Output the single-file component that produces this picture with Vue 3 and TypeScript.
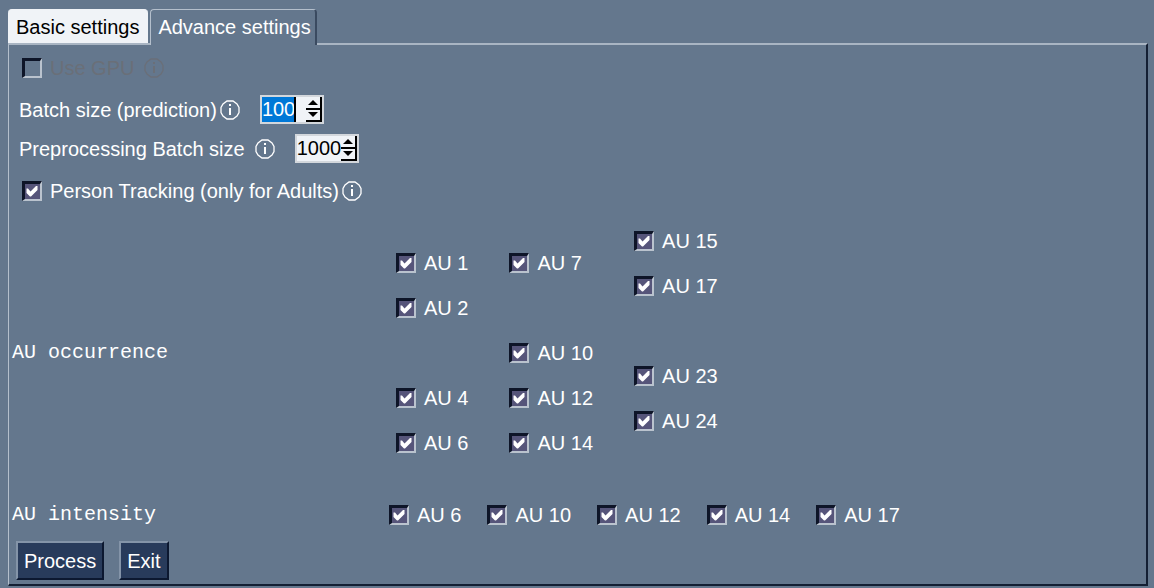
<script setup lang="ts">
import { defineComponent, h, onMounted, reactive, ref } from 'vue'

interface Unit {
  id: string
  label: string
  checked: boolean
}

const InfoIcon = defineComponent({
  render() {
    return h('svg', { class: 'info', viewBox: '0 0 20 20', 'aria-hidden': 'true' }, [
      h('path', { d: 'M7 1H13L17 4L19 7.5V12.5L17 16L13 19H7L3 16L1 12.5V7.5L3 4z' }),
      h('path', { d: 'M9 8H11V15H9zM9 4H11V6H9z', class: 'dot' }),
    ])
  },
})

function unit(group: string, n: number): Unit {
  return { id: `${group}-${n}`, label: `AU ${n}`, checked: true }
}

const occurrence = reactive<(Unit | null)[][]>([
  [unit('occ', 1), unit('occ', 2), null, unit('occ', 4), unit('occ', 6)],
  [unit('occ', 7), null, unit('occ', 10), unit('occ', 12), unit('occ', 14)],
  [unit('occ', 15), unit('occ', 17), null, unit('occ', 23), unit('occ', 24), null],
])
const intensity = reactive<Unit[]>([6, 10, 12, 14, 17].map((n) => unit('int', n)))

const useGpu = ref(false)
const tracking = ref(true)
const batch = ref(100)
const preBatch = ref(1000)
const batchInput = ref<HTMLInputElement | null>(null)

onMounted(() => {
  batchInput.value?.focus()
  batchInput.value?.select()
})
</script>

<template>
  <main class="window">
    <div class="tabs" role="tablist">
      <button class="tab" role="tab" type="button" aria-selected="false">Basic settings</button>
      <button class="tab active" role="tab" type="button" aria-selected="true">Advance settings</button>
    </div>
    <section class="panel" role="tabpanel">
      <div class="row gpu">
        <label class="check disabled wide">
          <input v-model="useGpu" type="checkbox" disabled /><span>Use GPU</span>
        </label>
        <InfoIcon class="dim" />
      </div>
      <div class="row batch">
        <label for="batch">Batch size (prediction)</label>
        <InfoIcon />
        <div class="spin">
          <input id="batch" ref="batchInput" v-model.number="batch" type="text" />
          <span class="caret"></span>
          <div class="arrows">
            <button type="button" aria-label="Increase" @click="batch++"><svg viewBox="0 0 8 4"><path d="M0 4L4 0L8 4z" /></svg></button>
            <button type="button" aria-label="Decrease" @click="batch--"><svg viewBox="0 0 8 4"><path d="M0 0L4 4L8 0z" /></svg></button>
          </div>
        </div>
      </div>
      <div class="row batch">
        <label for="prebatch" class="wide">Preprocessing Batch size</label>
        <InfoIcon />
        <div class="spin">
          <input id="prebatch" v-model.number="preBatch" type="text" />
          <div class="arrows">
            <button type="button" aria-label="Increase" @click="preBatch++"><svg viewBox="0 0 8 4"><path d="M0 4L4 0L8 4z" /></svg></button>
            <button type="button" aria-label="Decrease" @click="preBatch--"><svg viewBox="0 0 8 4"><path d="M0 0L4 4L8 0z" /></svg></button>
          </div>
        </div>
      </div>
      <div class="row tracking">
        <label class="check"><input v-model="tracking" type="checkbox" /><span>Person Tracking (only for Adults)</span></label>
        <InfoIcon />
      </div>

      <div class="group occurrence">
        <span class="title">AU occurrence</span>
        <div v-for="(column, c) in occurrence" :key="c" class="column">
          <div v-for="(item, i) in column" :key="i" class="slot">
            <label v-if="item" class="check"><input :id="item.id" v-model="item.checked" type="checkbox" /><span>{{ item.label }}</span></label>
          </div>
        </div>
      </div>

      <div class="group intensity">
        <span class="title">AU intensity</span>
        <label v-for="item in intensity" :key="item.id" class="check"><input :id="item.id" v-model="item.checked" type="checkbox" /><span>{{ item.label }}</span></label>
      </div>

      <div class="actions">
        <button type="button">Process</button>
        <button type="button">Exit</button>
      </div>
    </section>
  </main>
</template>

<style>
body {
  background: #64778d;
}
</style>

<style scoped>
.window {
  box-sizing: border-box;
  min-height: 100vh;
  padding: 9px 6px 1px 8px;
  background: #64778d;
  color: #fff;
  font: 20px/24px "Liberation Sans", Arial, sans-serif;
}
button,
input {
  margin: 0;
  padding: 0;
  border: 0;
  border-radius: 0;
  font: inherit;
  color: inherit;
}
.tabs {
  display: flex;
  gap: 2px;
}
.tab {
  height: 34px;
  padding: 0 9px 0 8px;
  border-top: 1px solid #f0f3f7;
  border-radius: 4px 4px 0 0;
  background: #f0f3f7;
  color: #000;
}
.tab.active {
  position: relative;
  height: 36px;
  margin-bottom: -2px;
  padding: 0 4px 2px 7px;
  border-top: 1px solid #b4bfcc;
  border-left: 1px solid #b4bfcc;
  border-right: 2px solid #3a4a60;
  background: #64778d;
  color: #fff;
}
.panel {
  border: solid;
  border-width: 2px 2px 2px 1px;
  border-color: #a9b5c3 #141f33 #141f33 #b4bfcc;
  padding-bottom: 4px;
}
.row {
  display: flex;
  align-items: center;
}
.gpu {
  min-height: 45px;
  padding-left: 13px;
}
.batch {
  min-height: 39px;
  padding-left: 10px;
}
.tracking {
  min-height: 45px;
  margin-bottom: 5px;
  padding-left: 13px;
}
.info {
  width: 20px;
  height: 20px;
  margin-left: 3px;
  flex: none;
  fill: none;
  stroke: #fff;
  stroke-width: 1.3;
}
.info :deep(.dot) {
  fill: #fff;
  stroke: none;
}
.wide + .info {
  margin-left: 10px;
}
.dim {
  stroke: #6a6f78;
}
.dim :deep(.dot) {
  fill: #6a6f78;
}
.check {
  display: flex;
  align-items: center;
  gap: 8px;
  white-space: nowrap;
}
.check input {
  appearance: none;
  box-sizing: border-box;
  width: 20px;
  height: 20px;
  flex: none;
  border: solid;
  border-width: 3px 2px 2px 3px;
  border-color: #0e1528 #bac3ce #bac3ce #0e1528;
  background: #64778d;
}
.check input:checked {
  background: #56557a url("data:image/svg+xml,%3Csvg xmlns='http://www.w3.org/2000/svg' viewBox='0 0 15 15'%3E%3Cpath d='M1.5 4.5H3L5.5 7.5L11 2H12.5V6L6 12.5H5L1.5 9z' fill='white'/%3E%3C/svg%3E") center / 15px 15px no-repeat;
}
.disabled {
  color: #6a6f78;
}
.spin {
  position: relative;
  display: flex;
  box-sizing: border-box;
  width: 64px;
  height: 29px;
  margin-left: 20px;
  border: 2px solid #d3d7dc;
  background: #f0f3f7;
  color: #000;
}
.spin input {
  width: 44px;
  min-width: 0;
  height: 25px;
  box-sizing: border-box;
  background: transparent;
  line-height: 25px;
  outline: 0;
}
.spin input::selection {
  background: #0078d7;
  color: #fff;
}
.caret {
  position: absolute;
  top: 0;
  left: 32px;
  width: 2px;
  height: 25px;
  background: #000;
}
.arrows {
  display: grid;
  flex: 1;
  grid-template-rows: 1fr 1fr;
}
.arrows button {
  display: grid;
  place-items: center;
  min-height: 0;
  border-right: 2px solid #000;
  border-bottom: 2px solid #000;
  background: #f0f3f7;
}
.arrows svg {
  width: 10px;
  height: 5px;
}
.group {
  display: flex;
  align-items: center;
}
.title {
  box-sizing: border-box;
  padding-left: 3px;
  font-family: "Liberation Mono", "Courier New", monospace;
}
.occurrence {
  gap: 41px;
}
.occurrence .title {
  width: 346px;
}
.intensity {
  min-height: 53px;
  gap: 26px;
}
.intensity .title {
  width: 354px;
}
.slot {
  display: flex;
  align-items: center;
  height: 45px;
}
.actions {
  display: flex;
  gap: 15px;
  padding-left: 7px;
}
.actions button {
  height: 39px;
  padding: 0 6px;
  border: 2px solid;
  border-color: #8494a8 #0c1830 #0c1830 #8494a8;
  background: #283b5b;
}
</style>
